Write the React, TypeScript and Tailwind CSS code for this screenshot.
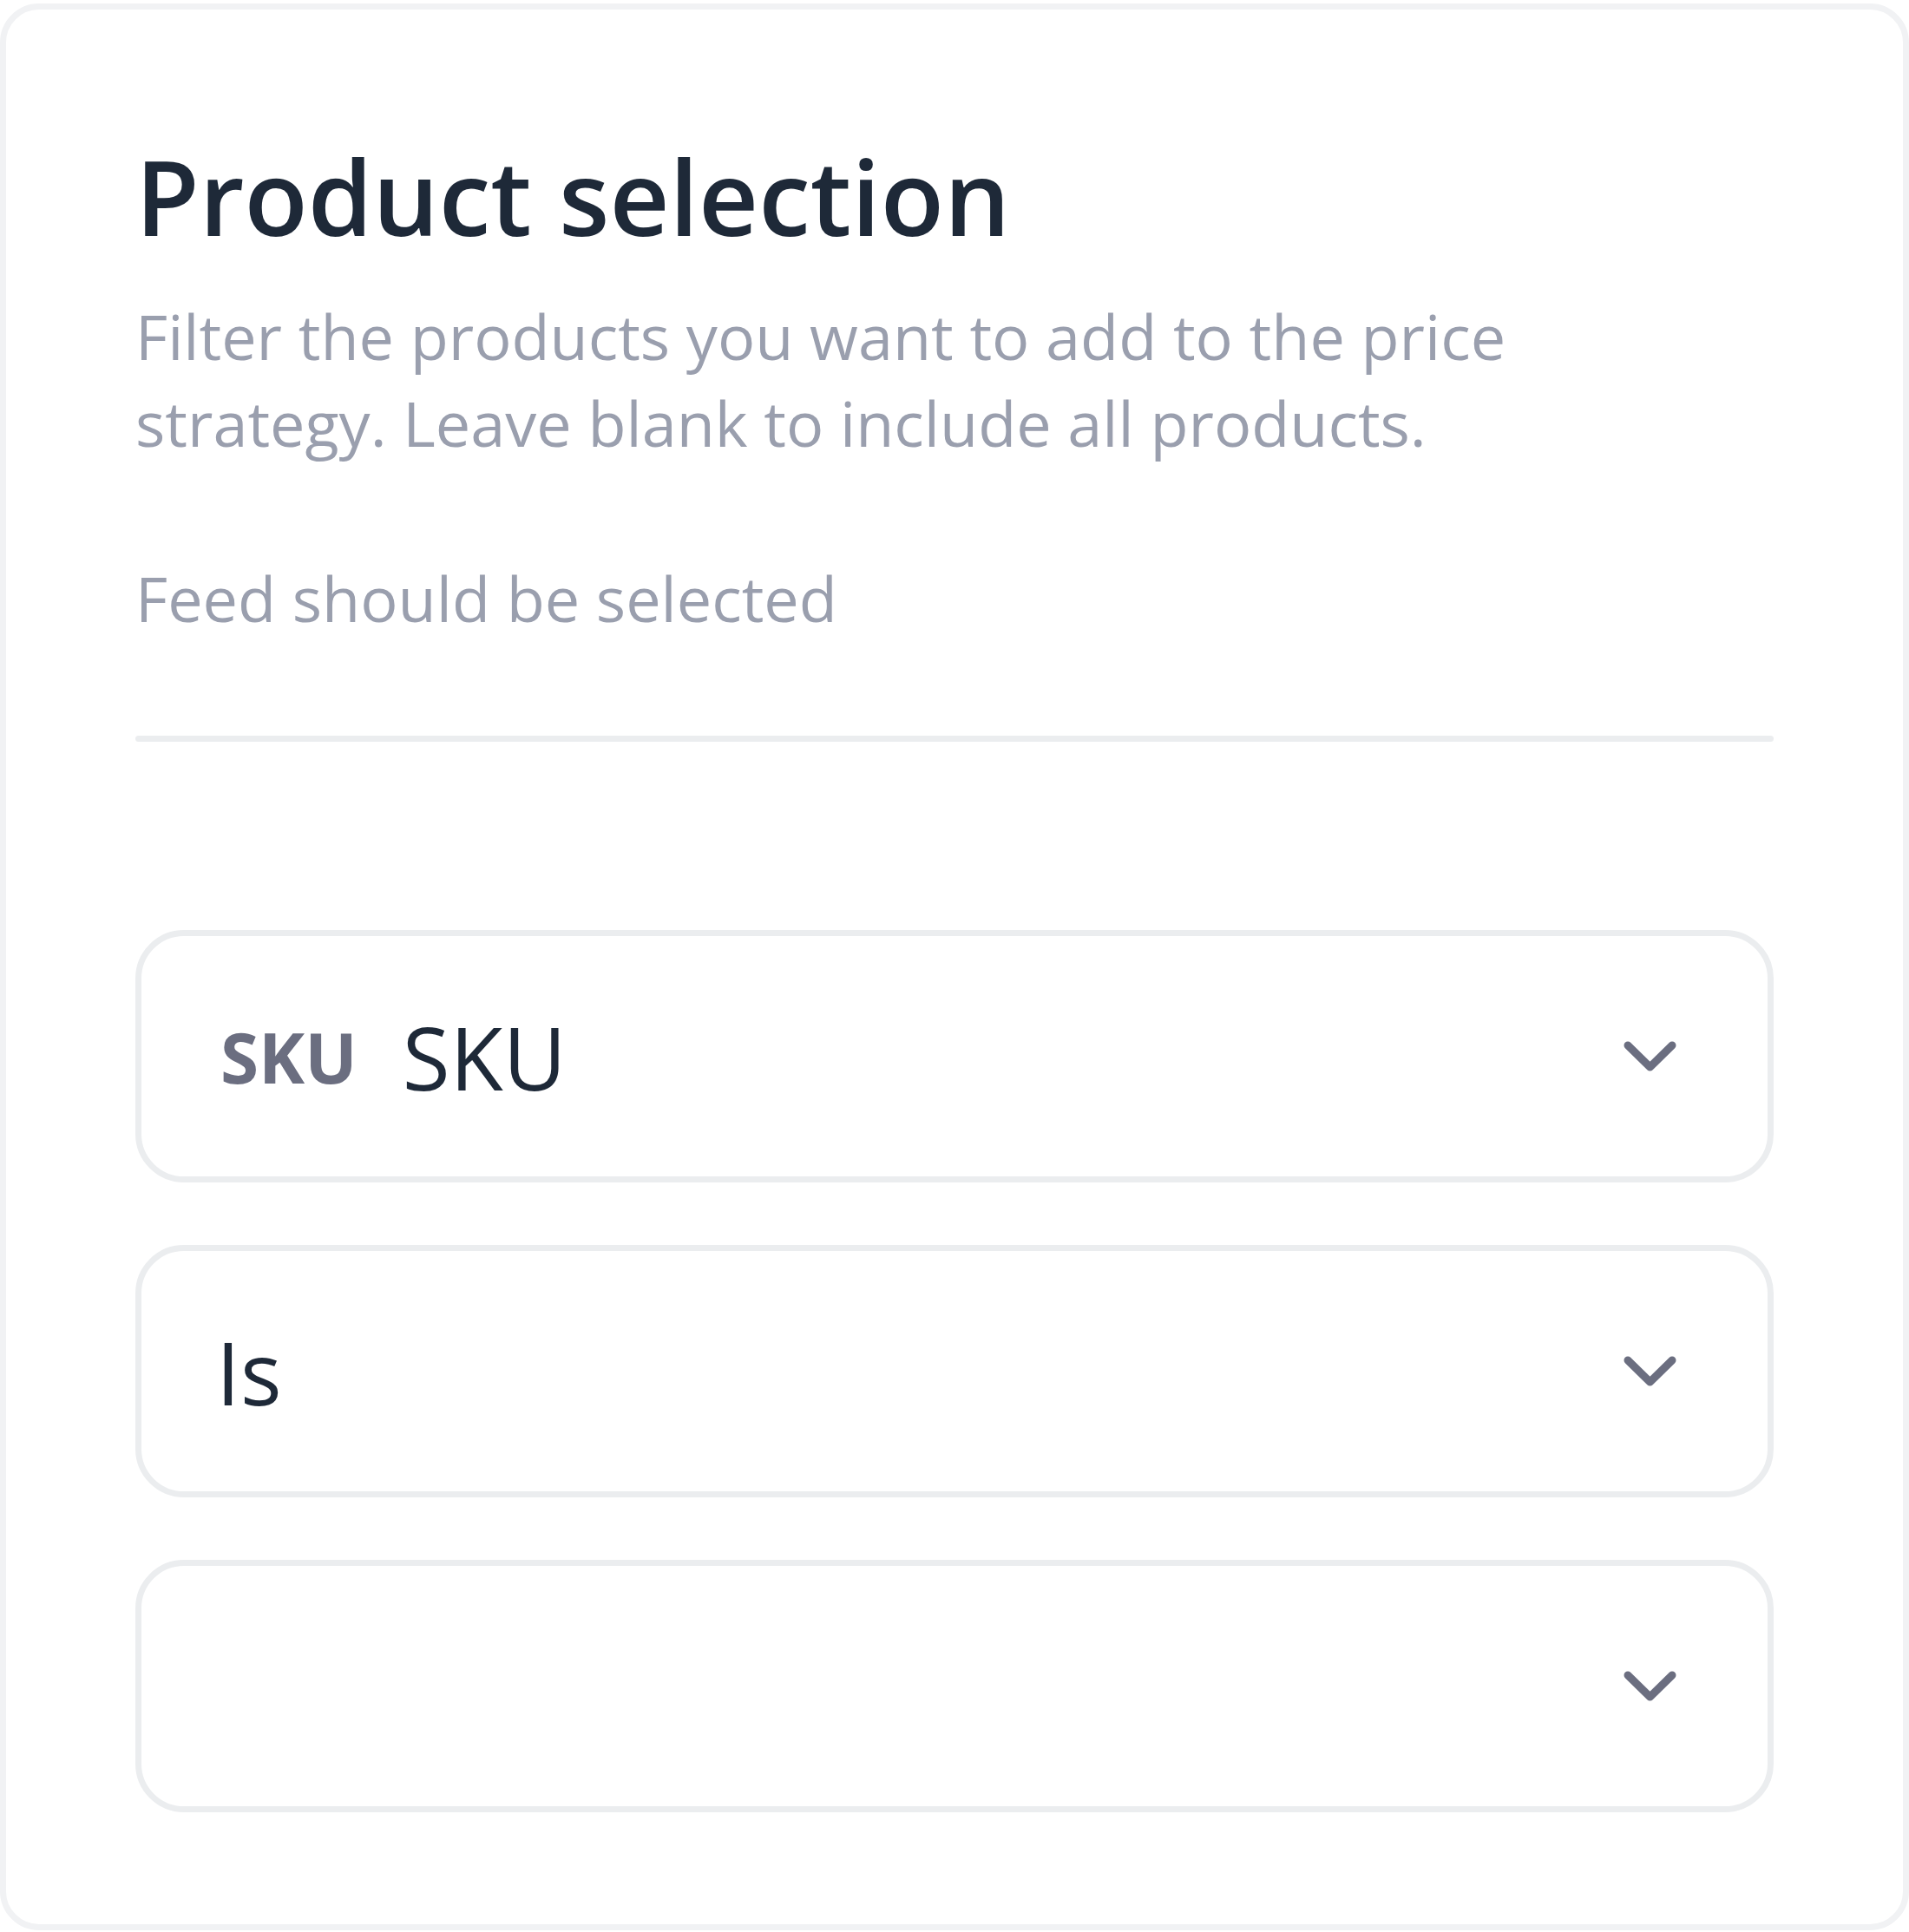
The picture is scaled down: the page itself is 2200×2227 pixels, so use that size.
import { ReactNode } from 'react';

function Chevron() {
  return (
    <svg width="61" height="36" viewBox="0 0 61 36" fill="none" className="shrink-0">
      <path
        d="M5 5 L30.5 30 L56 5"
        stroke="#6b6e80"
        strokeWidth="9"
        strokeLinecap="round"
        strokeLinejoin="round"
      />
    </svg>
  );
}

function SelectBox({ children }: { children?: ReactNode }) {
  return (
    <div className="flex h-[291px] items-center rounded-[56px] border-[7px] border-[#ebedef] bg-white pl-[86px] pr-[105px]">
      <div className="flex flex-1 items-center">{children}</div>
      <Chevron />
    </div>
  );
}

export default function App() {
  return (
    <div className="bg-white pt-[4px] font-['Open_Sans',sans-serif]">
      <div className="flex h-[2221px] flex-col rounded-[45px] border-[7px] border-[#f1f2f4] bg-white px-[149px] pt-[141px]">
        <h1 className="text-[120px] font-semibold leading-[148px] text-[#1e2938]">
          Product selection
        </h1>
        <p className="mt-[37px] max-w-[1800px] text-[72px] leading-[100px] text-[#9a9fae]">
          Filter the products you want to add to the price strategy. Leave blank to include all
          products.
        </p>
        <p className="mt-[102px] text-[72px] leading-[100px] text-[#9a9fae]">
          Feed should be selected
        </p>
        <div className="mt-[109px] h-[7px] rounded-full bg-[#ebedef]" />

        <div className="mt-[217px] flex flex-col gap-[72px]">
          <SelectBox>
            <span className="ml-[5px] text-[80px] font-bold leading-[80px] text-[#6b6e80]">
              SKU
            </span>
            <span className="ml-[52px] text-[100px] leading-[100px] text-[#1e2938]">SKU</span>
          </SelectBox>
          <SelectBox>
            <span className="text-[100px] leading-[100px] text-[#1e2938]">Is</span>
          </SelectBox>
          <SelectBox />
        </div>
      </div>
    </div>
  );
}
